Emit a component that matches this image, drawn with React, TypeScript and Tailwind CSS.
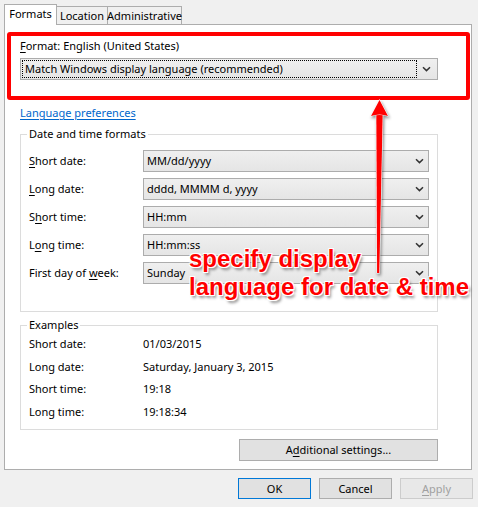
import React from "react";

const Chevron = () => (
  <svg width="9" height="6" viewBox="0 0 9 6" className="shrink-0">
    <path d="M1 1.2 L4.5 4.6 L8 1.2" fill="none" stroke="#333" strokeWidth="1.5" />
  </svg>
);

function Combo({ text }: { text: string }) {
  return (
    <div className="flex items-center h-[22px] w-[286px] border border-[#acacac] bg-linear-to-b from-[#efefef] to-[#e5e5e5] pl-[3px] pr-[4px]">
      <span className="flex-1 truncate">{text}</span>
      <Chevron />
    </div>
  );
}

function Label({ pre, u, post }: { pre: string; u: string; post: string }) {
  return (
    <span>
      {pre}
      <span className="underline underline-offset-2">{u}</span>
      {post}
    </span>
  );
}

export default function App() {
  const formats: [React.ReactNode, string][] = [
    [<Label pre="" u="S" post="hort date:" />, "MM/dd/yyyy"],
    [<Label pre="" u="L" post="ong date:" />, "dddd, MMMM d, yyyy"],
    [<Label pre="S" u="h" post="ort time:" />, "HH:mm"],
    [<Label pre="L" u="o" post="ng time:" />, "HH:mm:ss"],
    [<Label pre="First day of " u="w" post="eek:" />, "Sunday"],
  ];
  const examples: [string, string][] = [
    ["Short date:", "01/03/2015"],
    ["Long date:", "Saturday, January 3, 2015"],
    ["Short time:", "19:18"],
    ["Long time:", "19:18:34"],
  ];
  return (
    <div className="relative w-[478px] h-[507px] bg-[#f0f0f0] overflow-hidden font-['Noto_Sans',sans-serif] text-[11px] text-black leading-[16px]">
      {/* tabs */}
      <div className="flex items-end h-[24px] pl-[4px]">
        <div className="relative z-10 -mb-px h-[21px] w-[53px] bg-white border border-b-0 border-[#adadad] flex items-center justify-center pb-[2px]">
          Formats
        </div>
        <div className="h-[18px] w-[51px] border-t border-r border-[#adadad] flex items-center justify-center">
          Location
        </div>
        <div className="h-[18px] w-[74px] border-t border-r border-[#adadad] flex items-center justify-center">
          Administrative
        </div>
      </div>

      {/* panel */}
      <div className="ml-[4px] w-[468px] bg-white border border-[#adadad] pl-[15px] pr-[33px] pb-[8px] flex flex-col">
        <div className="mt-[13px] h-[16px]">
          <Label pre="" u="F" post="ormat: English (United States)" />
        </div>
        <div className="mt-[4px] flex items-center h-[22px] border border-[#acacac] bg-linear-to-b from-[#efefef] to-[#e5e5e5] p-px">
          <div className="flex-1 h-full border border-dotted border-black flex items-center pl-[2px]">
            Match Windows display language (recommended)
          </div>
          <div className="w-[19px] flex justify-center">
            <Chevron />
          </div>
        </div>
        <div className="mt-[25px] h-[16px]">
          <span className="text-[#0066cc] underline underline-offset-2">Language preferences</span>
        </div>

        {/* date and time formats */}
        <div className="mt-[13px] border border-[#dcdcdc] pl-[8px] pr-[8px] pb-[27px]">
          <div className="-mt-[9px] -ml-[2px] w-fit bg-white px-[2px] h-[16px]">Date and time formats</div>
          <div className="mt-[8px] flex flex-col gap-[6px]">
            {formats.map(([label, val], i) => (
              <div key={i} className="flex items-center h-[22px]">
                <div className="w-[114px]">{label}</div>
                <Combo text={val} />
              </div>
            ))}
          </div>
        </div>

        {/* examples */}
        <div className="mt-[13px] border border-[#dcdcdc] pl-[8px] pr-[8px] pb-[6px]">
          <div className="-mt-[9px] -ml-[2px] w-fit bg-white px-[2px] h-[16px]">Examples</div>
          <div className="flex flex-col">
            {examples.map(([label, val]) => (
              <div key={label} className="flex items-center h-[22.5px]">
                <div className="w-[114px]">{label}</div>
                <div>{val}</div>
              </div>
            ))}
          </div>
        </div>

        <div className="mt-[9px] self-end w-[199px] h-[22px] border border-[#adadad] bg-[#e1e1e1] flex items-center justify-center">
          <Label pre="A" u="d" post="ditional settings..." />
        </div>
      </div>

      {/* dialog buttons */}
      <div className="mt-[8px] flex justify-end gap-[8px] pr-[5px]">
        <div className="w-[73px] h-[21px] border border-[#0078d7] bg-[#e1e1e1] flex items-center justify-center">OK</div>
        <div className="w-[73px] h-[21px] border border-[#adadad] bg-[#e1e1e1] flex items-center justify-center">Cancel</div>
        <div className="w-[73px] h-[21px] border border-[#cccccc] bg-[#e8e8e8] text-[#a0a0a0] flex items-center justify-center">
          <Label pre="" u="A" post="pply" />
        </div>
      </div>

      {/* annotation overlay */}
      <div className="absolute left-[7px] top-[32px] w-[463px] h-[68px] border-4 border-[#ff0000] rounded-[3px]" />
      <svg
        className="absolute left-[360px] top-[95px] [filter:drop-shadow(1px_2px_1.5px_rgba(0,0,0,0.45))]"
        width="40"
        height="185"
        viewBox="0 0 40 185"
      >
        <g fill="#ff0000" stroke="#ffffff" strokeWidth="1.2" strokeLinejoin="round" paintOrder="stroke">
          <path d="M16.3 20 L22.7 20 L19.3 178 L17.1 178 Z" />
          <path d="M19.5 5 L28 21 Q19.5 18 11 21 Z" />
        </g>
      </svg>
      <div className="absolute left-[189px] top-[245px] font-['Liberation_Sans',Arial,sans-serif] font-bold text-[24px] leading-[28px] text-[#ff0000] whitespace-nowrap [text-shadow:-1px_-1px_0_#fff,1px_-1px_0_#fff,-1px_1px_0_#fff,1px_1px_0_#fff,0_-1px_0_#fff,0_1px_0_#fff,2px_3px_3px_rgba(0,0,0,0.45)]">
        <div>specify display</div>
        <div>language for date &amp; time</div>
      </div>
    </div>
  );
}
